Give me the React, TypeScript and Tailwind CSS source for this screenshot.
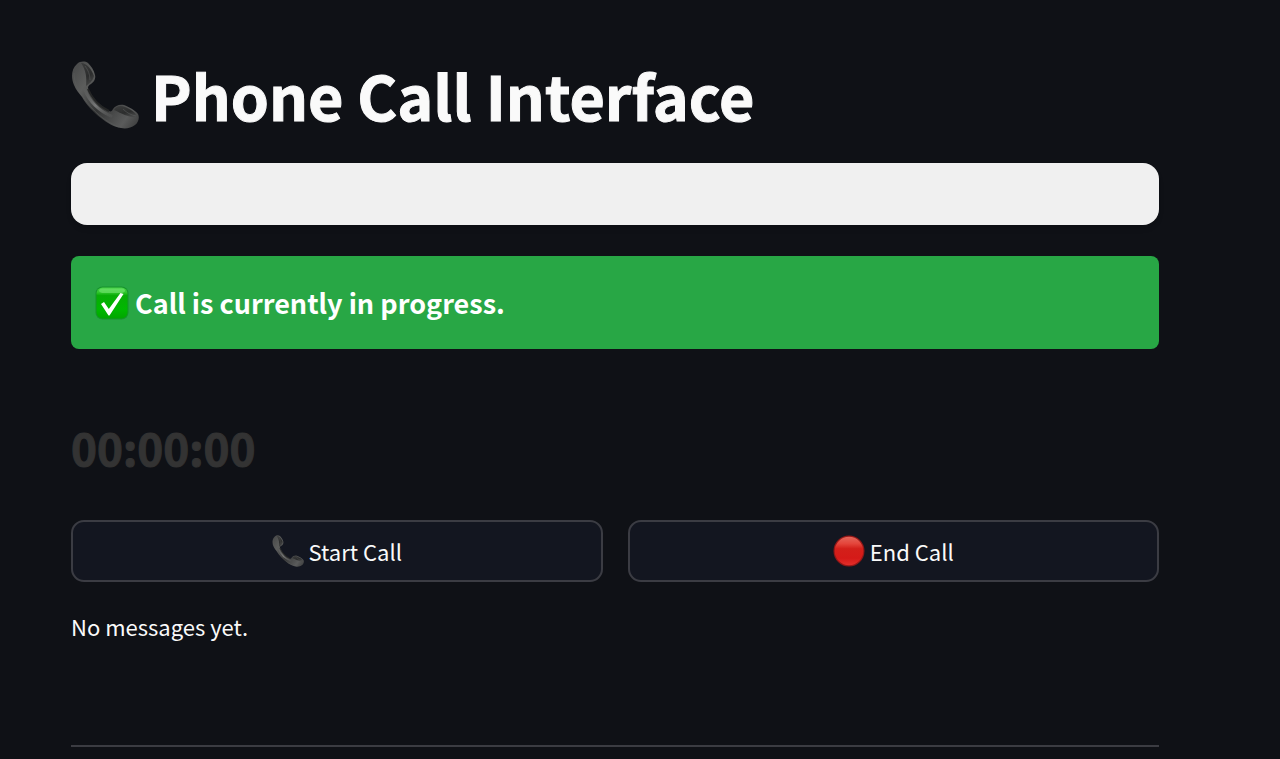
import { useId } from "react";

function Receiver({ className }: { className: string }) {
  const id = useId();
  return (
    <svg viewBox="0 0 68 68" className={className} aria-hidden="true">
      <defs>
        <linearGradient id={`${id}a`} x1="0" y1="0.2" x2="1" y2="0.9">
          <stop offset="0" stopColor="#4c4d4d" />
          <stop offset="0.2" stopColor="#5c5d5c" />
          <stop offset="0.5" stopColor="#343535" />
          <stop offset="0.85" stopColor="#5a5b5b" />
          <stop offset="1" stopColor="#404141" />
        </linearGradient>
        <linearGradient id={`${id}b`} x1="0.2" y1="0" x2="0.7" y2="1">
          <stop offset="0" stopColor="#3a3b3b" />
          <stop offset="0.6" stopColor="#2c2d2d" />
          <stop offset="1" stopColor="#484949" />
        </linearGradient>
        <linearGradient id={`${id}c`} x1="0" y1="0" x2="1" y2="1">
          <stop offset="0" stopColor="#6c6d6d" stopOpacity="0.2" />
          <stop offset="0.5" stopColor="#777878" />
          <stop offset="1" stopColor="#6c6d6d" stopOpacity="0.2" />
        </linearGradient>
      </defs>
      <path
        d="M6 3C9 0 14 0 17 2C20 5 23 9 24 14C25 18 23 21 20 23C18 24 17 25 17 27C20 36 30 46 38 50C40 51 41 50 42 48C44 45 48 43 53 44C58 46 64 49 67 53C69 57 67 62 64 64C60 67 55 68 50 67C43 66 36 62 30 57C22 51 15 43 11 36C8 32 5 29 3 24C0 17 0 8 6 3Z"
        fill={`url(#${id}a)`}
      />
      <path d="M10 2C16 2 21 9 23 15C22 20 18 23 15 25C16 17 15 9 10 2Z" fill={`url(#${id}b)`} />
      <path d="M43 49C45 45 50 44 54 46C59 48 65 51 66 56C58 57 52 53 43 49Z" fill={`url(#${id}b)`} />
      <path d="M14 29C18 40 28 50 40 55" fill="none" stroke={`url(#${id}c)`} strokeWidth="3" strokeLinecap="round" />
      <path d="M17 28C21 38 30 46 38 50" fill="none" stroke="#242525" strokeWidth="2" />
      <path d="M3 12C3 23 8 30 13 37C21 49 34 61 48 66" fill="none" stroke="#5c5d5d" strokeWidth="1" opacity="0.5" />
      <path d="M14 5C17 9 19 13 19 19M52 48C56 52 60 54 65 55" fill="none" stroke="#606161" strokeWidth="1" opacity="0.5" />
    </svg>
  );
}

function CheckBadge() {
  const id = useId();
  return (
    <svg viewBox="0 0 34 34" className="size-[34px] shrink-0" aria-hidden="true">
      <defs>
        <linearGradient id={id} x1="0" y1="0" x2="0" y2="1">
          <stop offset="0" stopColor="#48d247" />
          <stop offset="0.16" stopColor="#2fc52c" />
          <stop offset="0.26" stopColor="#08ac06" />
          <stop offset="0.7" stopColor="#00b800" />
          <stop offset="1" stopColor="#00a600" />
        </linearGradient>
      </defs>
      <rect x="0.5" y="0.5" width="33" height="33" rx="7" fill="#16932c" />
      <rect x="1.5" y="1.5" width="31" height="31" rx="6" fill={`url(#${id})`} />
      <path d="M4 5Q4 2.500 7 2.500H27Q30 2.500 30 5Q29 7 25 7H9Q5 7 4 5Z" fill="#8cf08a" opacity="0.45" />
      <path d="M6 18L9 16L13.800 23L25.500 7L28.500 8L14.500 29.500H13.500Z" fill="#fff" />
    </svg>
  );
}

function RedDisc() {
  const id = useId();
  return (
    <svg viewBox="0 0 32 32" className="size-8 shrink-0" aria-hidden="true">
      <defs>
        <linearGradient id={id} x1="0" y1="0" x2="0" y2="1">
          <stop offset="0" stopColor="#e4665a" />
          <stop offset="0.25" stopColor="#e4443a" />
          <stop offset="0.42" stopColor="#d3201a" />
          <stop offset="0.75" stopColor="#d51a18" />
          <stop offset="1" stopColor="#e22e2a" />
        </linearGradient>
      </defs>
      <circle cx="16" cy="16" r="15.500" fill="#941717" />
      <circle cx="16" cy="16" r="14.300" fill={`url(#${id})`} />
    </svg>
  );
}

const buttonClass =
  "flex h-[62px] items-center justify-center gap-[5px] rounded-[13px] border-2 border-[#3b3c43] bg-[#131620] text-[22px] leading-8";

export default function App() {
  return (
    <div className="min-h-screen bg-[#0f1116] font-['Noto_Sans_CJK_SC','Open_Sans',sans-serif] text-[#fafafa]">
      <main className="flex flex-col pt-[57px] pr-[121px] pl-[71px]">
        <h1 className="flex items-center gap-3 text-[61px] leading-[76px] font-bold [-webkit-text-stroke:1px_currentColor]">
          <Receiver className="size-[68px] shrink-0" />
          Phone Call Interface
        </h1>
        <div className="mt-[30px] h-[62px] rounded-2xl bg-[#f0f0f0] shadow-md" />
        <div
          role="status"
          className="mt-[31px] flex items-center gap-1.5 rounded-lg bg-[#28a745] px-6 py-7 text-[27px] leading-[37px] font-bold text-white"
        >
          <CheckBadge />
          Call is currently in progress.
        </div>
        <div
          role="timer"
          className="mt-[68px] text-[44px] leading-[60px] font-bold text-[#333333] [-webkit-text-stroke:1px_currentColor]"
        >
          00:00:00
        </div>
        <div className="mt-[43px] grid grid-cols-2 gap-[25px]">
          <button type="button" className={buttonClass}>
            <Receiver className="size-8 shrink-0" />
            Start Call
          </button>
          <button type="button" className={buttonClass}>
            <RedDisc />
            End Call
          </button>
        </div>
        <p className="mt-7 text-[22px] leading-8">No messages yet.</p>
        <hr className="mt-[103px] border-t-2 border-[#3b3c42]" />
      </main>
    </div>
  );
}
